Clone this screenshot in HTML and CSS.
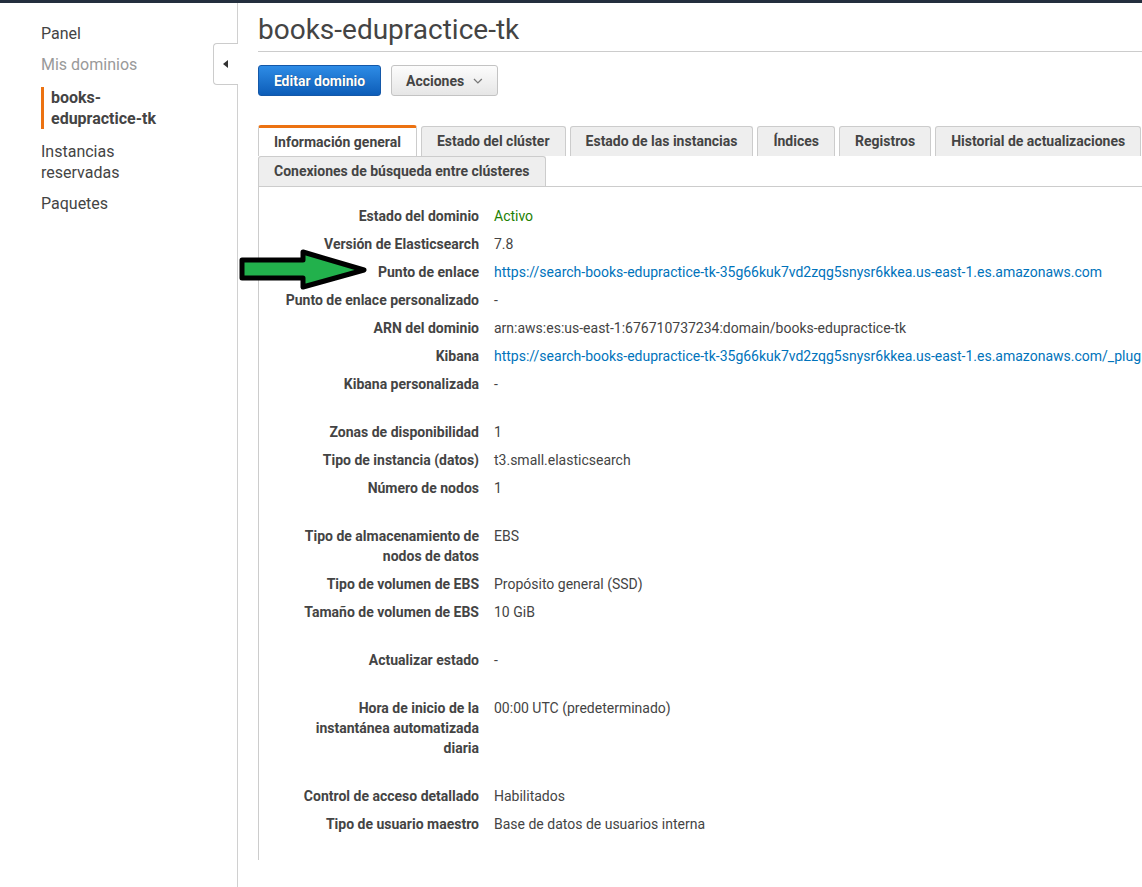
FILE: index.html
```html
<!DOCTYPE html>
<html lang="es">
<head>
<meta charset="utf-8">
<title>books-edupractice-tk</title>
<link rel="stylesheet" href="styles.css">
</head>
<body>
<div class="topbar"></div>
<div class="page">
  <aside class="sidebar">
    <ul class="nav">
      <li class="nav-item">Panel</li>
      <li class="nav-item nav-muted">Mis dominios</li>
      <li class="nav-item nav-active">books-<br>edupractice-tk</li>
      <li class="nav-item">Instancias<br>reservadas</li>
      <li class="nav-item">Paquetes</li>
    </ul>
    <div class="collapse-tab"><span class="tri"></span></div>
  </aside>
  <main class="main">
    <h1 class="title">books-edupractice-tk</h1>
    <div class="actions">
      <button class="btn btn-primary">Editar dominio</button>
      <button class="btn btn-default">Acciones
        <svg class="chev" width="10" height="6" viewBox="0 0 10 6"><path d="M1 1 L5 5 L9 1" fill="none" stroke="#777" stroke-width="1.3"/></svg>
      </button>
    </div>
    <div class="tabs">
      <div class="tab tab-active">Información general</div>
      <div class="tab">Estado del clúster</div>
      <div class="tab">Estado de las instancias</div>
      <div class="tab">Índices</div>
      <div class="tab">Registros</div>
      <div class="tab">Historial de actualizaciones</div>
      <div class="tab">Conexiones de búsqueda entre clústeres</div>
    </div>
    <div class="panel">
      <div class="group">
        <div class="row"><div class="label">Estado del dominio</div><div class="value ok">Activo</div></div>
        <div class="row"><div class="label">Versión de Elasticsearch</div><div class="value">7.8</div></div>
        <div class="row"><div class="label">Punto de enlace</div><div class="value link">https://search-books-edupractice-tk-35g66kuk7vd2zqg5snysr6kkea.us-east-1.es.amazonaws.com</div></div>
        <div class="row"><div class="label">Punto de enlace personalizado</div><div class="value">-</div></div>
        <div class="row"><div class="label">ARN del dominio</div><div class="value">arn:aws:es:us-east-1:676710737234:domain/books-edupractice-tk</div></div>
        <div class="row"><div class="label">Kibana</div><div class="value link">https://search-books-edupractice-tk-35g66kuk7vd2zqg5snysr6kkea.us-east-1.es.amazonaws.com/_plug</div></div>
        <div class="row"><div class="label">Kibana personalizada</div><div class="value">-</div></div>
      </div>
      <div class="group">
        <div class="row"><div class="label">Zonas de disponibilidad</div><div class="value">1</div></div>
        <div class="row"><div class="label">Tipo de instancia (datos)</div><div class="value">t3.small.elasticsearch</div></div>
        <div class="row"><div class="label">Número de nodos</div><div class="value">1</div></div>
      </div>
      <div class="group">
        <div class="row"><div class="label">Tipo de almacenamiento de nodos de datos</div><div class="value">EBS</div></div>
        <div class="row"><div class="label">Tipo de volumen de EBS</div><div class="value">Propósito general (SSD)</div></div>
        <div class="row"><div class="label">Tamaño de volumen de EBS</div><div class="value">10 GiB</div></div>
      </div>
      <div class="group">
        <div class="row"><div class="label">Actualizar estado</div><div class="value">-</div></div>
      </div>
      <div class="group">
        <div class="row"><div class="label">Hora de inicio de la instantánea automatizada diaria</div><div class="value">00:00 UTC (predeterminado)</div></div>
      </div>
      <div class="group">
        <div class="row"><div class="label">Control de acceso detallado</div><div class="value">Habilitados</div></div>
        <div class="row"><div class="label">Tipo de usuario maestro</div><div class="value">Base de datos de usuarios interna</div></div>
      </div>
    </div>
  </main>
  <svg class="arrow" width="140" height="50" viewBox="236 246 140 50">
    <polygon points="242,260 303,260 303,252 364,270 303,287 303,278 242,278" fill="#22b14c" stroke="#000" stroke-width="5" stroke-linejoin="round"/>
  </svg>
</div>
</body>
</html>
```
FILE: styles.css
```css
html, body {
  margin: 0;
  padding: 0;
  background: #fff;
  overflow: hidden;
}
body {
  font-family: Roboto, "Liberation Sans", Arial, sans-serif;
  color: #444;
  width: 1142px;
  height: 887px;
}
.topbar {
  height: 3px;
  background: #232f3e;
}
.page {
  position: relative;
  display: flex;
  height: 884px;
}
.sidebar {
  position: relative;
  box-sizing: border-box;
  width: 238px;
  flex: 0 0 238px;
  border-right: 1px solid #d0d0d0;
  padding-top: 20px;
  padding-left: 41px;
}
.nav {
  list-style: none;
  margin: 0;
  padding: 0;
  display: flex;
  flex-direction: column;
  gap: 10px;
}
.nav-item {
  font-size: 16px;
  line-height: 21px;
  color: #444;
}
.nav-muted {
  color: #999;
}
.nav-active {
  margin: 2px 0;
  border-left: 3px solid #ec7211;
  padding-left: 7px;
  font-weight: 700;
  color: #444;
}
.collapse-tab {
  position: absolute;
  top: 40px;
  right: -1px;
  width: 25px;
  height: 42px;
  box-sizing: border-box;
  background: #fff;
  border: 1px solid #ccc;
  border-right: none;
  border-radius: 4px 0 0 4px;
  display: flex;
  align-items: center;
  justify-content: center;
}
.tri {
  width: 0;
  height: 0;
  border-top: 4px solid transparent;
  border-bottom: 4px solid transparent;
  border-right: 5px solid #333;
  margin-right: 1px;
}
.main {
  flex: 1;
  min-width: 0;
  padding-left: 20px;
  overflow: hidden;
}
.title {
  margin: 10px 0 0;
  font-size: 28px;
  line-height: 34px;
  font-weight: 400;
  color: #444;
  padding-bottom: 4px;
  border-bottom: 1px solid #ccc;
}
.actions {
  margin-top: 13px;
  display: flex;
  gap: 10px;
}
.btn {
  box-sizing: border-box;
  height: 31px;
  border-radius: 3px;
  font-family: Roboto, "Liberation Sans", Arial, sans-serif;
  font-size: 14px;
  font-weight: 700;
  padding: 0 14px;
  display: flex;
  align-items: center;
  gap: 9px;
}
.btn-primary {
  width: 123px;
  justify-content: center;
  color: #fff;
  background: linear-gradient(#2e8ce6, #0d5db8);
  border: 1px solid #1458a8;
  text-shadow: 0 0 1px rgba(0,0,0,0.5);
}
.btn-default {
  width: 107px;
  justify-content: center;
  color: #444;
  background: linear-gradient(#fcfcfc, #e6e6e6);
  border: 1px solid #c3c3c3;
}
.chev {
  display: block;
}
.tabs {
  margin-top: 29px;
  display: flex;
  flex-wrap: wrap;
  align-items: flex-end;
  column-gap: 4px;
}
.tab {
  box-sizing: border-box;
  height: 30px;
  padding: 0 15px;
  border: 1px solid #ccc;
  border-bottom: none;
  border-radius: 3px 3px 0 0;
  background: #eee;
  font-size: 14px;
  font-weight: 700;
  line-height: 29px;
  color: #444;
  white-space: nowrap;
}
.tab-active {
  height: 31px;
  background: #fff;
  border-top: 3px solid #ec7211;
  line-height: 28px;
}
.panel {
  border-top: 1px solid #ccc;
  border-left: 1px solid #ccc;
  padding: 15px 0 22px;
}
.group + .group {
  margin-top: 20px;
}
.row {
  display: grid;
  grid-template-columns: 220px 1fr;
  column-gap: 15px;
  padding: 4px 0;
  font-size: 14px;
  line-height: 20px;
}
.label {
  box-sizing: border-box;
  padding-left: 25px;
  text-align: right;
  font-weight: 700;
  color: #444;
}
.value {
  white-space: nowrap;
  color: #444;
}
.value.ok {
  color: #1d8102;
}
.value.link {
  color: #0073bb;
}
.arrow {
  position: absolute;
  left: 236px;
  top: 243px;
}
```
